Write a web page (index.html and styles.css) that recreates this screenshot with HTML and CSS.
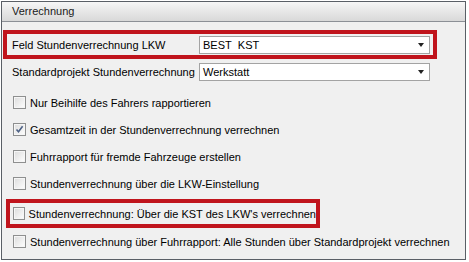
FILE: index.html
```html
<!DOCTYPE html>
<html>
<head>
<meta charset="utf-8">
<link rel="stylesheet" href="styles.css">
</head>
<body>
<div class="panel">
  <div class="panel-head">Verrechnung</div>
  <div class="panel-body">
    <div class="field-row highlight first">
      <span class="label">Feld Stundenverrechnung LKW</span>
      <div class="combo"><span>BEST&nbsp; KST</span><i class="arrow"></i></div>
    </div>
    <div class="field-row second">
      <span class="label">Standardprojekt Stundenverrechnung</span>
      <div class="combo"><span>Werkstatt</span><i class="arrow"></i></div>
    </div>
    <div class="checks">
      <div class="check-row"><span class="box"></span><span>Nur Beihilfe des Fahrers rapportieren</span></div>
      <div class="check-row"><span class="box checked"><svg viewBox="0 0 9 9" width="9" height="9"><path d="M1.5 4.5 L3.5 6.8 L7.6 1.3" fill="none" stroke="#4d6185" stroke-width="1.6"/></svg></span><span>Gesamtzeit in der Stundenverrechnung verrechnen</span></div>
      <div class="check-row"><span class="box"></span><span>Fuhrrapport für fremde Fahrzeuge erstellen</span></div>
      <div class="check-row"><span class="box"></span><span>Stundenverrechnung über die LKW-Einstellung</span></div>
      <div class="check-row highlight boxed"><span class="box"></span><span>Stundenverrechnung: Über die KST des LKW's verrechnen</span></div>
      <div class="check-row"><span class="box"></span><span>Stundenverrechnung über Fuhrrapport: Alle Stunden über Standardprojekt verrechnen</span></div>
    </div>
  </div>
</div>
</body>
</html>
```

FILE: styles.css
```css
* { box-sizing: border-box; }
html, body { margin: 0; padding: 0; background: #ffffff; }
body {
  font-family: "Liberation Sans", Arial, sans-serif;
  font-size: 11px;
  color: #000;
  white-space: nowrap;
}
.panel {
  margin: 1px 0 0 1px;
  width: 465px;
  height: 259px;
  border: 1px solid #5a5f66;
  background: #f0f0f0;
  display: flex;
  flex-direction: column;
}
.panel-head {
  height: 20px;
  border-bottom: 1px solid #8c9096;
  background: linear-gradient(#f6f6f6, #e4e4e4 60%, #d9d9d9);
  padding-left: 10px;
  line-height: 19px;
  color: #1a1a1a;
}
.panel-body {
  display: flex;
  flex-direction: column;
}
.field-row {
  display: flex;
  align-items: center;
  justify-content: space-between;
}
.highlight { border: 4px solid #c0141c; }
.field-row.first {
  margin: 8px 0 0 1px;
  width: 434px;
  height: 29px;
  padding: 0 3px 0 5px;
}
.field-row.second {
  margin: 4px 0 0 10px;
  width: 418px;
  height: 18px;
}
.combo {
  width: 231px;
  height: 18px;
  border: 1px solid #a3a3a3;
  background: #fff;
  display: flex;
  align-items: center;
  justify-content: space-between;
  padding: 0 5px 0 3px;
}
.arrow {
  width: 0; height: 0;
  border-left: 3.5px solid transparent;
  border-right: 3.5px solid transparent;
  border-top: 4px solid #222;
}
.checks {
  display: flex;
  flex-direction: column;
  margin-top: 8px;
}
.check-row {
  display: flex;
  align-items: center;
  height: 27px;
  padding-left: 11px;
  gap: 4px;
}
.check-row.boxed {
  margin: 2px 0 0 4px;
  width: 314px;
  height: 29px;
  padding-left: 3px;
}
.box {
  width: 13px;
  height: 13px;
  border: 1px solid #8e8f8f;
  background: linear-gradient(135deg, #dcdcdc, #f4f4f4 70%, #ffffff);
  box-shadow: inset 0 0 0 1px #f6f6f6;
  display: flex;
  align-items: center;
  justify-content: center;
}
```
